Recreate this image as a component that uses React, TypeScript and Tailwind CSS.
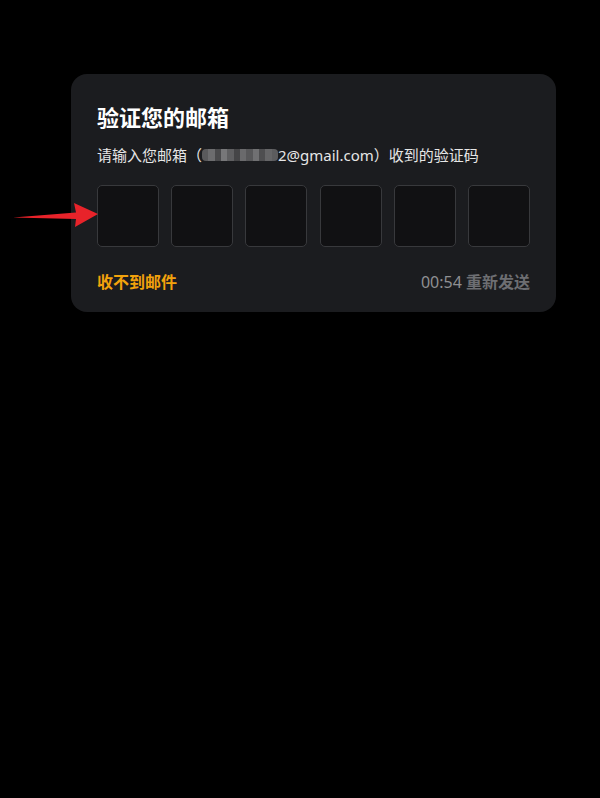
import React from "react";

const font = { fontFamily: '"Noto Sans", "Noto Sans CJK SC", sans-serif' };

const blur = ["#5a5a5c", "#6c6c6e", "#4a4a4c", "#777779", "#5f5f61", "#454547", "#6a6a6c", "#58585a", "#707072", "#4e4e50", "#656567", "#5c5c5e"];

const App: React.FC = () => {
  return (
    <div className="relative min-h-[798px] w-full bg-black pt-[74px]" style={font}>
      <div className="ml-[71px] w-[485px] rounded-2xl bg-[#1b1c1f] px-[26px] pb-[18px] pt-[29px]">
        <h1 className="text-[22px] font-bold leading-7 text-white">验证您的邮箱</h1>
        <p className="mt-[12px] flex items-center text-[15px] leading-6 text-[#e6e6e6]">
          请输入您邮箱（
          <span className="flex h-[12px] w-[76px] overflow-hidden rounded-sm">
            {blur.map((c, i) => (
              <span key={i} className="h-full flex-1" style={{ backgroundColor: c }} />
            ))}
          </span>
          2@gmail.com）收到的验证码
        </p>
        <div className="mt-[18px] flex justify-between">
          {[0, 1, 2, 3, 4, 5].map((i) => (
            <div key={i} className="h-[62px] w-[62px] rounded-[5px] border border-[#38393c] bg-[#111113]" />
          ))}
        </div>
        <div className="mt-[23px] flex items-center justify-between text-[16px] leading-6">
          <span className="font-bold text-[#f2a20c]">收不到邮件</span>
          <span className="text-[#8f8f92]">
            00:54 <span className="font-bold text-[#6d6e72]">重新发送</span>
          </span>
        </div>
      </div>
      <svg className="absolute left-[12px] top-[201px]" width="88" height="28" viewBox="0 0 88 28">
        <path d="M1 16.5 L64 11.5 L62 2 L86 13 L63 26 L64 18 Z" fill="#e8232a" />
      </svg>
    </div>
  );
};

export default App;
